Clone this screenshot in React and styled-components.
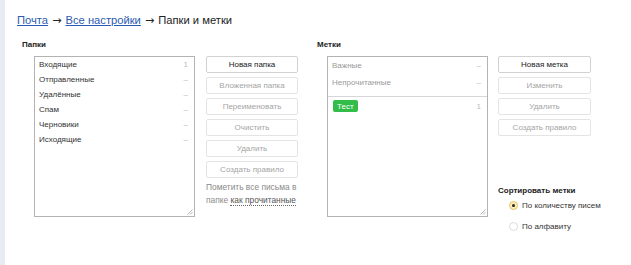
import React from "react";
import styled, { createGlobalStyle, css } from "styled-components";

const Global = createGlobalStyle`
  html, body { margin: 0; padding: 0; background: #fff; }
  body { font-family: Arial, "Liberation Sans", Helvetica, sans-serif; color: #222; }
`;

const Page = styled.div`
  display: flex;
  min-height: 265px;
`;

const Strip = styled.div`
  width: 5px;
  flex-shrink: 0;
  background: #e7ecf4;
`;

const Main = styled.div`
  flex: 1;
  padding: 12px 0 0 12px;
`;

const Crumbs = styled.div`
  font-size: 11.2px;
  line-height: 16px;
  height: 16px;
  color: #222;
  white-space: nowrap;
`;

const CrumbLink = styled.a`
  color: #2a5bb0;
  text-decoration: underline;
`;

const Arrow = styled.span`
  font-family: "DejaVu Sans", sans-serif;
  font-size: 11px;
  line-height: 0;
  margin: 0 1px;
`;

const Columns = styled.div`
  display: flex;
  margin: 12px 0 0 5px;
`;

const Section = styled.div`
  width: ${(p) => p.$w || "auto"};
  flex-shrink: 0;
`;

const Heading = styled.div`
  font-size: 8px;
  font-weight: bold;
  line-height: 10px;
  height: 10px;
  margin-bottom: 6px;
  color: #222;
`;

const Body = styled.div`
  display: flex;
  align-items: flex-start;
  padding-left: ${(p) => p.$indent}px;
  gap: ${(p) => p.$gap}px;
`;

const ListBox = styled.div`
  position: relative;
  width: 161px;
  height: 161px;
  box-sizing: border-box;
  border: 1px solid #b3b3b3;
  background: #fff;
`;

const Grip = styled.svg`
  position: absolute;
  right: 1px;
  bottom: 1px;
  width: 7px;
  height: 7px;
`;

const Row = styled.div`
  display: flex;
  align-items: center;
  justify-content: space-between;
  height: ${(p) => p.$h}px;
  padding: 0 6px 0 4px;
  font-size: 8px;
  color: ${(p) => (p.$muted ? "#9a9a9a" : "#333")};
`;

const Count = styled.span`
  color: #bdbdbd;
  font-size: 8px;
`;

const Divider = styled.div`
  border-top: 1px solid #d6d6d6;
  margin-top: 5px;
`;

const BadgeRow = styled.div`
  display: flex;
  align-items: center;
  justify-content: space-between;
  padding: 3px 6px 0 5px;
`;

const Badge = styled.span`
  display: inline-flex;
  align-items: center;
  height: 12px;
  padding: 0 4px;
  border-radius: 2px;
  background: #32bd4b;
  color: #fff;
  font-size: 8px;
`;

const ButtonCol = styled.div`
  display: flex;
  flex-direction: column;
  gap: 4px;
  width: ${(p) => p.$w}px;
`;

const Button = styled.button`
  height: 17px;
  box-sizing: border-box;
  border: 1px solid #e4e4e4;
  border-radius: 2px;
  background: #fff;
  font-family: inherit;
  font-size: 8px;
  color: #a5a5a5;
  padding: 0;
  ${(p) =>
    p.$primary &&
    css`
      color: #222;
      border-color: #d2d2d2;
    `}
`;

const Note = styled.div`
  margin-top: -1px;
  font-size: 8.4px;
  line-height: 12.5px;
  color: #8a8a8a;
`;

const NoteLink = styled.span`
  color: #555;
  border-bottom: 1px dotted #666;
`;

const RightCol = styled.div`
  display: flex;
  flex-direction: column;
`;

const SortTitle = styled.div`
  margin-top: 50px;
  font-size: 8px;
  font-weight: bold;
  line-height: 10px;
  color: #222;
`;

const RadioList = styled.div`
  display: flex;
  flex-direction: column;
  gap: 5px;
  margin-top: 1px;
  padding-left: 11px;
`;

const RadioRow = styled.label`
  display: flex;
  align-items: center;
  gap: 4px;
  height: 16px;
  font-size: 8px;
  color: #333;
`;

const RadioDot = styled.span`
  width: 9px;
  height: 9px;
  box-sizing: border-box;
  border-radius: 50%;
  border: 1px solid ${(p) => (p.$on ? "#e2c66a" : "#dcdcdc")};
  background: ${(p) => (p.$on ? "#fdeeb8" : "#fff")};
  display: flex;
  align-items: center;
  justify-content: center;
  &::after {
    content: "";
    width: 3px;
    height: 3px;
    border-radius: 50%;
    background: ${(p) => (p.$on ? "#222" : "transparent")};
  }
`;

const GripIcon = () => (
  <Grip viewBox="0 0 7 7">
    <path d="M6.5 1.5 L1.5 6.5 M6.5 4 L4 6.5" stroke="#a0a0a0" strokeWidth="0.8" fill="none" />
  </Grip>
);

const folders = [
  ["Входящие", "1"],
  ["Отправленные", "–"],
  ["Удалённые", "–"],
  ["Спам", "–"],
  ["Черновики", "–"],
  ["Исходящие", "–"],
];

const folderButtons = [
  "Новая папка",
  "Вложенная папка",
  "Переименовать",
  "Очистить",
  "Удалить",
  "Создать правило",
];

const labelButtons = ["Новая метка", "Изменить", "Удалить", "Создать правило"];

export default function App() {
  return (
    <>
      <Global />
      <Page>
        <Strip />
        <Main>
          <Crumbs>
            <CrumbLink>Почта</CrumbLink> <Arrow>→</Arrow> <CrumbLink>Все настройки</CrumbLink>{" "}
            <Arrow>→</Arrow> Папки и метки
          </Crumbs>
          <Columns>
            <Section $w="295px">
              <Heading>Папки</Heading>
              <Body $indent={12} $gap={11}>
                <ListBox>
                  {folders.map(([name, n]) => (
                    <Row key={name} $h={15}>
                      <span>{name}</span>
                      <Count>{n}</Count>
                    </Row>
                  ))}
                  <GripIcon />
                </ListBox>
                <ButtonCol $w={92}>
                  {folderButtons.map((b, i) => (
                    <Button key={b} $primary={i === 0}>
                      {b}
                    </Button>
                  ))}
                  <Note>
                    Пометить все письма в<br />
                    папке <NoteLink>как прочитанные</NoteLink>
                  </Note>
                </ButtonCol>
              </Body>
            </Section>
            <Section>
              <Heading>Метки</Heading>
              <Body $indent={10} $gap={10}>
                <ListBox>
                  <Row $h={17} $muted>
                    <span>Важные</span>
                    <Count>–</Count>
                  </Row>
                  <Row $h={17} $muted>
                    <span>Непрочитанные</span>
                    <Count>–</Count>
                  </Row>
                  <Divider />
                  <BadgeRow>
                    <Badge>Тест</Badge>
                    <Count>1</Count>
                  </BadgeRow>
                  <GripIcon />
                </ListBox>
                <RightCol>
                  <ButtonCol $w={93}>
                    {labelButtons.map((b, i) => (
                      <Button key={b} $primary={i === 0}>
                        {b}
                      </Button>
                    ))}
                  </ButtonCol>
                  <SortTitle>Сортировать метки</SortTitle>
                  <RadioList>
                    <RadioRow>
                      <RadioDot $on />
                      По количеству писем
                    </RadioRow>
                    <RadioRow>
                      <RadioDot />
                      По алфавиту
                    </RadioRow>
                  </RadioList>
                </RightCol>
              </Body>
            </Section>
          </Columns>
        </Main>
      </Page>
    </>
  );
}
